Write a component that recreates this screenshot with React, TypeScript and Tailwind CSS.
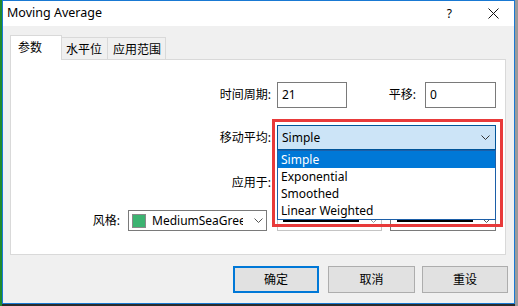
import React from "react";

const font = { fontFamily: '"Noto Sans", "Noto Sans CJK SC", sans-serif' };

function Chevron({ color = "#333" }: { color?: string }) {
  return (
    <svg width="9" height="5" viewBox="0 0 9 5" className="shrink-0">
      <polyline points="0.5,0.5 4.5,4.5 8.5,0.5" fill="none" stroke={color} strokeWidth="1" />
    </svg>
  );
}

function Label({ w, children }: { w: string; children: React.ReactNode }) {
  return <div className={`${w} text-right text-[12px] leading-none text-black shrink-0`}>{children}</div>;
}

export default function App() {
  return (
    <div className="relative w-[518px] h-[306px] overflow-hidden bg-[#2b2b2b] flex text-black" style={font}>
      <div className="w-[2px] h-full bg-[#1f8a2e]" />
      <div className="w-[513px] h-[304px] border border-[#1979d3] flex flex-col bg-[#f0f0f0]">
        {/* title bar */}
        <div className="h-[25px] bg-white flex items-center pl-[4px] shrink-0">
          <span className="text-[12.5px] leading-none">Moving Average</span>
          <div className="flex-1" />
          <span className="text-[12px] leading-none mr-[36px] mt-[1px]">?</span>
          <svg width="11" height="11" viewBox="0 0 11 11" className="mr-[15px]">
            <line x1="0.5" y1="0.5" x2="10.5" y2="10.5" stroke="#111" strokeWidth="1" />
            <line x1="10.5" y1="0.5" x2="0.5" y2="10.5" stroke="#111" strokeWidth="1" />
          </svg>
        </div>
        {/* body */}
        <div className="flex-1 flex flex-col pt-[9px]">
          <div className="flex items-end h-[24px] ml-[7px]">
            <div className="relative z-10 w-[52px] h-[25px] mb-[-1px] bg-white border-l border-t border-r border-[#d9d9d9] flex items-center pl-[7px] text-[12px] leading-none">
              参数
            </div>
            <div className="w-[46px] h-[22px] border-t border-r border-[#d9d9d9] flex items-center pl-[4px] pt-[2px] text-[12px] leading-none">
              水平位
            </div>
            <div className="w-[58px] h-[22px] border-t border-r border-[#d9d9d9] flex items-center pl-[5px] pt-[2px] text-[12px] leading-none">
              应用范围
            </div>
          </div>
          <div className="ml-[7px] mr-[8px] h-[196px] border border-[#d9d9d9] bg-white flex flex-col">
            {/* row 1 */}
            <div className="mt-[22px] h-[26px] flex items-center">
              <Label w="w-[260px]">时间周期:</Label>
              <div className="ml-[6px] w-[70px] h-full border border-[#7a7a7a] flex items-center pl-[4px] text-[12px] leading-none">21</div>
              <Label w="w-[69px]">平移:</Label>
              <div className="ml-[9px] w-[71px] h-full border border-[#7a7a7a] flex items-center pl-[4px] text-[12px] leading-none">0</div>
            </div>
            {/* row 2 */}
            <div className="mt-[17px] h-[25px] flex items-center">
              <Label w="w-[260px]">移动平均:</Label>
              <div className="ml-[6px] w-[219px] h-full border border-[#005499] bg-[#cce4f7] flex items-center pl-[4px] pr-[5px] text-[12px] leading-none">
                <span className="flex-1">Simple</span>
                <Chevron />
              </div>
            </div>
            {/* row 3 (select hidden under the open list) */}
            <div className="mt-[20px] h-[25px] flex items-center">
              <Label w="w-[260px]">应用于:</Label>
              <div className="ml-[6px] w-[219px] h-full border border-[#7a7a7a] bg-[#e5e5e5] flex items-center justify-end pr-[5px]">
                <Chevron />
              </div>
            </div>
            {/* row 4 */}
            <div className="mt-[15px] h-[21px] flex items-center">
              <Label w="w-[109px]">风格:</Label>
              <div className="ml-[8px] w-[139px] h-full border border-[#7a7a7a] flex items-center pl-[3px] pr-[3px] text-[12px] leading-none">
                <div className="w-[14px] h-[14px] border border-[#8a8a8a] bg-[#3cb371] shrink-0" />
                <span className="ml-[6px] w-[91px] overflow-hidden whitespace-nowrap">MediumSeaGreen</span>
                <div className="flex-1" />
                <Chevron color="#555" />
              </div>
              <div className="ml-[10px] w-[105px] h-full border border-[#c4c4c4] flex items-center pl-[5px] pr-[3px]">
                <div className="w-[76px] h-[3px] bg-black" />
                <div className="flex-1" />
                <Chevron color="#999" />
              </div>
              <div className="ml-[8px] w-[106px] h-full border border-[#7a7a7a] flex items-center pl-[6px] pr-[4px]">
                <div className="w-[76px] h-[3px] bg-black" />
                <div className="flex-1" />
                <Chevron color="#555" />
              </div>
            </div>
          </div>
          {/* buttons */}
          <div className="mt-[11px] h-[27px] flex justify-end pr-[6px]">
            <div className="w-[86px] h-full border-2 border-[#0078d7] bg-[#e1e1e1] flex items-center justify-center text-[12px] leading-none">确定</div>
            <div className="ml-[9px] w-[87px] h-full border border-[#adadad] bg-[#e1e1e1] flex items-center justify-center text-[12px] leading-none">取消</div>
            <div className="ml-[7px] w-[86px] h-full border border-[#adadad] bg-[#e1e1e1] flex items-center justify-center text-[12px] leading-none">重设</div>
          </div>
        </div>
      </div>
      <div className="w-[3px] h-full bg-[#9a9a9a]" />

      {/* dropdown list overlay */}
      <div className="absolute left-[277px] top-[150px] w-[219px] h-[70px] border border-[#1c5fa8] bg-white flex flex-col text-[12px] leading-none">
        <div className="h-[17px] bg-[#0078d7] text-white flex items-center pl-[3px]">Simple</div>
        <div className="h-[17px] flex items-center pl-[3px]">Exponential</div>
        <div className="h-[17px] flex items-center pl-[3px]">Smoothed</div>
        <div className="h-[17px] flex items-center pl-[3px]">Linear Weighted</div>
      </div>
      {/* red annotation */}
      <div className="absolute left-[272px] top-[119px] w-[231px] h-[108px] border-[3px] border-[#e83a3a]" />
    </div>
  );
}
